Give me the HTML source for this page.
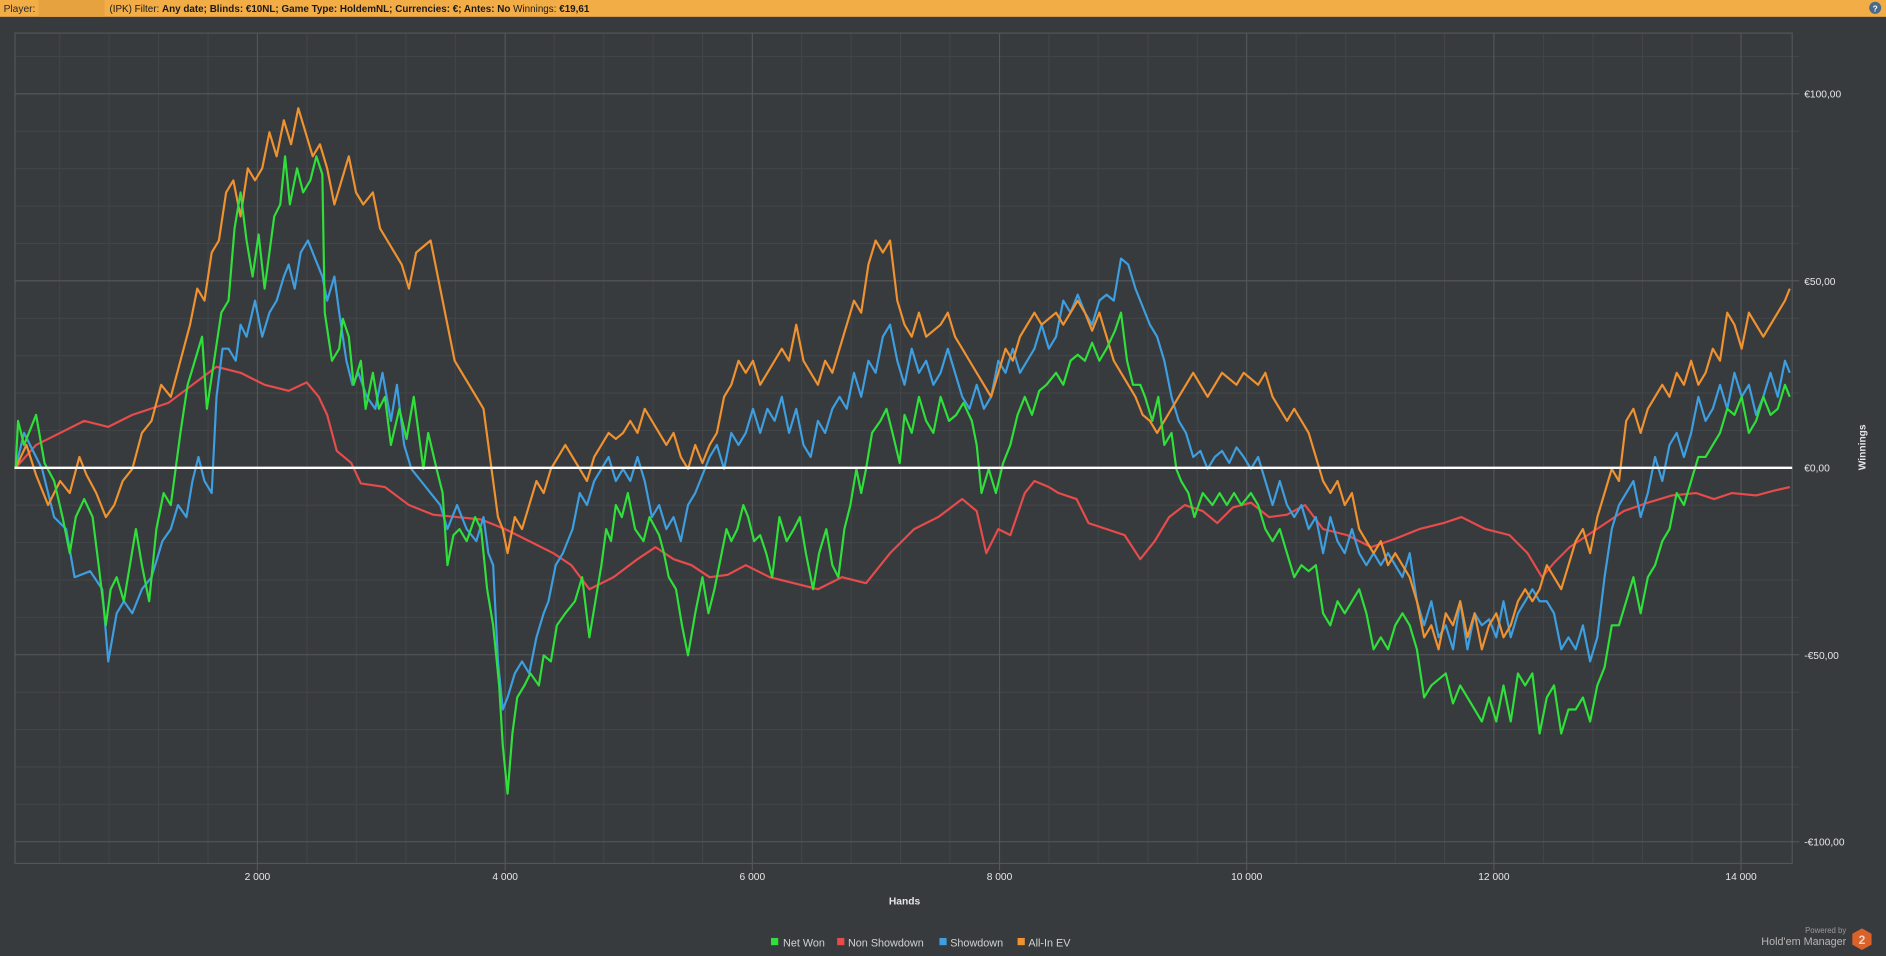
<!DOCTYPE html>
<html><head><meta charset="utf-8"><style>
html,body{margin:0;padding:0;background:#383b3e;overflow:hidden}
svg{display:block}
text{font-family:"Liberation Sans","DejaVu Sans",sans-serif}
</style></head><body>
<svg width="1886" height="956" viewBox="0 0 1568 795" preserveAspectRatio="none" xmlns="http://www.w3.org/2000/svg">
<rect x="0" y="0" width="1568" height="795" fill="#383b3e"/>
<rect x="0" y="0" width="1568" height="14" fill="#f2ad47"/>
<rect x="32" y="0" width="55" height="14" fill="#e6a23f"/>
<text x="3" y="10" font-size="8.5" fill="#2a2a2a">Player:</text>
<text x="91" y="10" font-size="8.5" fill="#1a1a1a" textLength="399" lengthAdjust="spacingAndGlyphs">(IPK)  Filter:  <tspan font-weight="bold">Any date; Blinds: €10NL; Game Type: HoldemNL; Currencies: €; Antes: No</tspan>  Winnings:  <tspan font-weight="bold">€19,61</tspan></text>
<circle cx="1559" cy="6.5" r="5" fill="#4a6a8a"/><text x="1559" y="9.5" font-size="7" fill="#fff" text-anchor="middle" font-weight="bold">?</text>

<g stroke="#424548" stroke-width="0.9" fill="none">
<path d="M49.6 27.5V718M90.7 27.5V718M131.8 27.5V718M173 27.5V718M255.2 27.5V718M296.3 27.5V718M337.5 27.5V718M378.6 27.5V718M460.8 27.5V718M502 27.5V718M543 27.5V718M584.2 27.5V718M666.5 27.5V718M707.6 27.5V718M748.7 27.5V718M789.8 27.5V718M872 27.5V718M913 27.5V718M954.3 27.5V718M995.4 27.5V718M1077.6 27.5V718M1118.8 27.5V718M1160 27.5V718M1201 27.5V718M1283.3 27.5V718M1324.4 27.5V718M1365.5 27.5V718M1406.6 27.5V718"/>
<path d="M12 47H1496M12 109.2H1496M12 140.3H1496M12 171.4H1496M12 202.5H1496M12 264.7H1496M12 295.8H1496M12 326.9H1496M12 358H1496M12 420.1H1496M12 451.2H1496M12 482.3H1496M12 513.4H1496M12 575.6H1496M12 606.7H1496M12 637.8H1496M12 668.9H1496"/>
</g>
<g stroke="#55585b" stroke-width="0.9" fill="none">
<path d="M214 27.5V724M420 27.5V724M625.5 27.5V724M831 27.5V724M1036.5 27.5V724M1242 27.5V724M1447.5 27.5V724"/>
<path d="M12 78H1496M12 233.5H1496M12 544.5H1496M12 700H1496"/>
<rect x="12.5" y="27.5" width="1477.5" height="690.5"/>
</g>

<g fill="none" stroke-width="1.8" stroke-linejoin="round">
<polyline stroke="#e84b4b" points="13,389 30,370 50,360 70,350 90,355 110,345 140,335 160,320 180,305 200,310 220,320 240,325 255,318 265,330 272,345 280,375 292,385 300,402 320,405 340,420 360,428 380,430 400,432 420,440 440,450 460,460 475,470 490,490 510,480 530,465 545,455 560,465 575,470 590,480 605,478 620,470 640,480 660,485 680,490 700,480 720,485 740,460 760,440 780,430 800,415 812,425 820,460 830,440 840,445 852,410 860,400 872,405 880,410 895,415 905,435 920,440 935,445 948,465 960,450 972,430 985,420 1000,425 1012,435 1025,422 1040,418 1055,430 1070,428 1085,420 1100,440 1120,445 1140,455 1160,448 1180,440 1200,435 1215,430 1235,440 1255,445 1270,460 1282,480 1292,468 1305,455 1320,445 1335,435 1350,425 1370,418 1390,412 1410,410 1425,415 1440,410 1460,412 1475,408 1488,405"/>
<polyline stroke="#3d9ee0" points="13,389 20,360 35,390 45,430 55,440 62,480 75,475 85,490 90,550 97,510 103,500 110,510 118,490 126,480 135,450 142,440 148,420 155,430 160,400 165,380 170,400 176,410 180,330 185,290 190,290 196,300 200,270 205,280 212,250 218,280 224,260 230,250 236,230 240,220 245,240 250,210 256,200 262,215 268,230 272,250 278,230 282,260 288,300 293,320 298,310 305,330 312,340 318,310 325,350 330,320 336,370 342,390 350,400 358,410 366,420 372,440 380,420 388,440 396,450 402,430 406,460 410,470 414,550 418,590 422,580 428,560 434,550 440,560 446,530 452,510 456,500 462,470 468,460 476,440 482,410 488,420 494,400 500,390 506,380 512,400 518,390 524,400 530,380 536,400 542,430 548,420 554,440 560,430 566,450 572,420 578,410 584,395 590,380 596,370 602,390 608,360 614,370 620,360 626,340 632,360 638,340 644,350 650,330 656,360 662,340 668,370 674,380 680,350 686,360 692,340 698,330 704,340 710,310 716,330 722,300 728,310 734,280 740,270 746,300 752,320 758,290 764,310 770,300 776,320 782,310 788,290 794,310 800,330 806,340 812,320 818,340 824,330 830,300 836,310 842,290 848,310 854,300 860,290 866,270 872,290 878,280 884,250 890,260 896,245 902,260 908,270 914,250 920,245 926,250 932,215 938,220 944,240 950,255 956,270 962,280 968,300 974,330 980,350 986,360 992,380 998,375 1004,390 1010,380 1016,375 1022,385 1028,372 1034,380 1040,390 1046,380 1052,400 1058,420 1064,400 1070,420 1076,430 1082,420 1088,440 1094,430 1100,460 1106,430 1112,450 1118,460 1124,440 1130,460 1136,470 1142,460 1148,470 1154,460 1160,470 1166,480 1172,460 1178,500 1184,520 1190,500 1196,530 1202,520 1208,540 1214,500 1220,540 1226,510 1232,520 1238,515 1244,530 1250,500 1256,530 1262,510 1268,500 1274,490 1280,500 1286,500 1292,510 1298,540 1304,530 1310,540 1316,520 1322,550 1328,530 1334,480 1340,440 1346,420 1352,410 1358,400 1364,430 1370,410 1376,380 1382,400 1388,370 1394,360 1400,380 1406,360 1412,330 1418,350 1424,340 1430,320 1436,340 1442,310 1448,330 1454,320 1460,345 1466,330 1472,310 1478,330 1484,300 1488,310"/>
<polyline stroke="#f0922f" points="13,389 22,370 30,395 40,420 50,400 58,410 66,380 72,395 80,410 88,430 95,420 102,400 110,390 118,360 126,350 134,320 142,330 150,300 158,270 164,240 170,250 176,210 182,200 188,160 194,150 200,180 206,140 212,150 218,140 224,110 230,130 236,100 242,120 248,90 254,110 260,130 266,120 272,140 278,170 284,150 290,130 296,160 302,170 310,160 316,190 322,200 328,210 334,220 340,240 346,210 352,205 358,200 362,220 366,240 372,270 378,300 384,310 390,320 396,330 402,340 406,370 410,400 414,430 418,440 422,460 428,430 434,440 440,420 446,400 452,410 458,390 464,380 470,370 476,380 482,390 488,400 494,380 500,370 506,360 512,365 518,360 524,350 530,360 536,340 542,350 548,360 554,370 560,360 566,380 572,390 578,370 584,385 590,370 596,360 602,330 608,320 614,300 620,310 626,300 632,320 638,310 644,300 650,290 656,300 662,270 668,300 674,310 680,320 686,300 692,310 698,290 704,270 710,250 716,260 722,220 728,200 734,210 740,200 746,250 752,270 758,280 764,260 770,280 776,275 782,270 788,260 794,280 800,290 806,300 812,310 818,320 824,330 830,310 836,290 842,300 848,280 854,270 860,260 866,270 872,265 878,260 884,270 890,260 896,250 902,260 908,275 914,260 920,280 926,300 932,310 938,320 944,330 950,345 956,350 962,360 968,350 974,340 980,330 986,320 992,310 998,320 1004,330 1010,320 1016,310 1022,315 1028,320 1034,310 1040,315 1046,320 1052,310 1058,330 1064,340 1070,350 1076,340 1082,350 1088,360 1094,380 1100,400 1106,410 1112,400 1118,420 1124,410 1130,440 1136,450 1142,460 1148,450 1154,470 1160,460 1166,470 1172,480 1178,500 1184,530 1190,520 1196,540 1202,510 1208,520 1214,500 1220,530 1226,510 1232,540 1238,520 1244,510 1250,530 1256,520 1262,500 1268,490 1274,500 1280,490 1286,470 1292,480 1298,490 1304,470 1310,450 1316,440 1322,460 1328,430 1334,410 1340,390 1346,400 1352,350 1358,340 1364,360 1370,340 1376,330 1382,320 1388,330 1394,310 1400,320 1406,300 1412,320 1418,310 1424,290 1430,300 1436,260 1442,270 1448,290 1454,260 1460,270 1466,280 1472,270 1478,260 1484,250 1488,240"/>
<polyline stroke="#2fe03a" points="13,389 15,350 20,370 30,345 37,385 45,400 52,430 58,460 63,430 70,415 77,430 82,470 88,520 92,490 97,480 103,500 108,470 113,440 118,470 124,500 130,440 136,410 142,420 150,360 156,320 162,300 168,280 172,340 178,300 184,260 190,250 195,190 200,160 205,200 210,230 215,195 220,240 228,180 233,170 237,130 241,170 247,140 252,160 258,150 263,130 268,145 270,260 276,300 282,290 285,265 290,280 294,320 300,300 304,340 310,310 315,340 320,330 325,370 332,340 338,365 344,330 352,390 356,360 363,390 368,410 372,470 377,445 382,440 388,450 395,430 400,440 405,490 410,520 415,570 418,620 422,660 426,610 430,580 436,570 441,560 448,570 452,545 458,550 463,520 470,510 478,500 484,480 490,530 495,500 500,470 504,440 508,450 512,420 517,430 522,410 528,440 535,450 540,430 548,445 552,460 556,480 562,490 567,520 572,545 578,510 584,480 589,510 594,490 598,470 604,440 608,450 613,440 618,420 622,430 627,450 632,445 637,460 642,480 648,430 654,450 660,440 665,430 670,460 676,490 681,460 687,440 692,470 697,480 702,440 707,420 712,390 716,410 720,390 725,360 732,350 737,340 742,360 748,385 752,345 758,360 764,330 770,350 776,360 782,330 789,350 795,345 801,335 808,350 812,370 816,410 822,390 828,410 834,385 840,370 846,345 852,330 858,345 864,325 870,320 878,310 884,320 890,300 896,295 902,300 908,285 914,300 920,290 927,275 932,260 937,300 942,320 948,320 952,330 958,350 963,330 968,370 974,360 978,390 982,400 988,410 993,430 1000,410 1008,420 1014,410 1020,420 1026,410 1032,420 1040,410 1046,420 1052,440 1058,450 1064,440 1070,460 1076,480 1082,470 1088,475 1094,470 1100,510 1106,520 1112,500 1118,510 1124,500 1130,490 1136,510 1142,540 1148,530 1154,540 1160,520 1166,510 1172,520 1178,540 1184,580 1190,570 1196,565 1202,560 1208,585 1214,570 1220,580 1226,590 1232,600 1238,580 1244,600 1250,570 1256,600 1262,560 1268,570 1274,560 1280,610 1286,580 1292,570 1298,610 1304,590 1310,590 1316,580 1322,600 1328,570 1334,555 1340,520 1346,520 1352,500 1358,480 1364,510 1370,480 1376,470 1382,450 1388,440 1394,410 1400,420 1406,400 1412,380 1418,380 1424,370 1430,360 1436,340 1442,345 1448,330 1454,360 1460,350 1466,330 1472,345 1478,340 1484,320 1488,330"/>
</g>
<line x1="12" y1="389" x2="1490" y2="389" stroke="#ffffff" stroke-width="2"/>

<g font-size="8.5" fill="#e6e6e6">
<text x="1500" y="81">€100,00</text>
<text x="1500" y="237">€50,00</text>
<text x="1500" y="392">€0,00</text>
<text x="1500" y="548">-€50,00</text>
<text x="1500" y="703">-€100,00</text>
<g text-anchor="middle">
<text x="214" y="732">2 000</text><text x="420" y="732">4 000</text><text x="625.5" y="732">6 000</text><text x="831" y="732">8 000</text><text x="1036.5" y="732">10 000</text><text x="1242" y="732">12 000</text><text x="1447.5" y="732">14 000</text>
</g>
<text x="752" y="752" text-anchor="middle" font-weight="bold">Hands</text>
<text transform="translate(1551,372) rotate(-90)" text-anchor="middle" font-weight="bold">Winnings</text>
</g>
<g font-size="9" fill="#d2d2d2">
<rect x="641" y="780" width="6" height="6" fill="#2fe03a"/><text x="651" y="787">Net Won</text>
<rect x="696" y="780" width="6" height="6" fill="#e84b4b"/><text x="705" y="787">Non Showdown</text>
<rect x="781" y="780" width="6" height="6" fill="#3d9ee0"/><text x="790" y="787">Showdown</text>
<rect x="846" y="780" width="6" height="6" fill="#f0922f"/><text x="855" y="787">All-In EV</text>
</g>
<text x="1535" y="776" font-size="6.5" fill="#9a9a9a" text-anchor="end">Powered by</text>
<text x="1535" y="786" font-size="9" fill="#b5b5b5" text-anchor="end">Hold'em Manager</text>
<polygon points="1548,772 1556,776.5 1556,785.5 1548,790 1540,785.5 1540,776.5" fill="#d8622a"/>
<text x="1548" y="785" font-size="10" font-weight="bold" fill="#f3d5c5" text-anchor="middle">2</text>
</svg>
</body></html>
